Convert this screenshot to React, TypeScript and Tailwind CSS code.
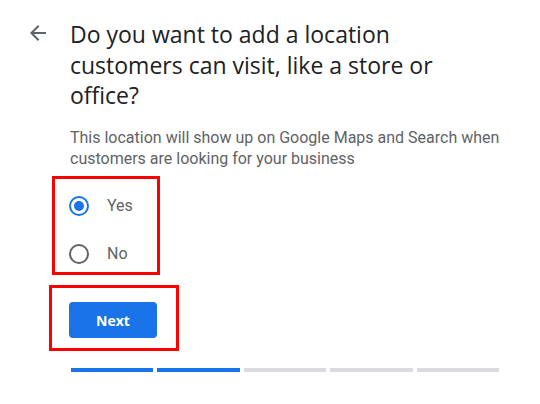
import React from "react";

export default function App() {
  return (
    <div className="w-[540px] h-[404px] bg-white flex overflow-hidden" style={{ fontFamily: "Roboto, Arial, sans-serif" }}>
      <div className="w-[70px] shrink-0 pl-[26px] pt-[21px]">
        <svg width="24" height="24" viewBox="0 0 24 24" fill="#5f6368">
          <path d="M20 11H7.83l5.59-5.59L12 4l-8 8 8 8 1.41-1.41L7.83 13H20v-2z" />
        </svg>
      </div>
      <div className="flex flex-col w-[440px] pt-[19px]">
        <h1 className="text-[23px] leading-[30.5px] text-[#202124] font-normal" style={{ fontFamily: "'Open Sans', Arial, sans-serif" }}>
          Do you want to add a location
          <br />
          customers can visit, like a store or
          <br />
          office?
        </h1>
        <p className="mt-[16px] text-[16px] leading-[21px] text-[#5f6368] whitespace-nowrap">
          This location will show up on Google Maps and Search when
          <br />
          customers are looking for your business
        </p>
        <div className="ml-[-18px] mt-[7.5px] w-[108px] h-[99px] border-[3px] border-[#ff0000] pt-[3px] pl-[14px]">
          <div className="flex items-center h-[48px]">
            <div className="w-[20px] h-[20px] rounded-full border-2 border-[#1a73e8] flex items-center justify-center">
              <div className="w-[10px] h-[10px] rounded-full bg-[#1a73e8]" />
            </div>
            <span className="ml-[18px] text-[16px] text-[#5f6368]">Yes</span>
          </div>
          <div className="flex items-center h-[48px]">
            <div className="w-[20px] h-[20px] rounded-full border-2 border-[#5f6368]" />
            <span className="ml-[18px] text-[16px] text-[#5f6368]">No</span>
          </div>
        </div>
        <div className="ml-[-21px] mt-[10px] w-[130px] h-[66px] border-[3px] border-[#ff0000] pt-[14px] pl-[17px]">
          <button className="w-[88px] h-[36px] rounded-[4px] bg-[#1a73e8] text-white text-[14px] font-bold flex items-center justify-center" style={{ fontFamily: "'Open Sans', Arial, sans-serif" }}>
            Next
          </button>
        </div>
        <div className="flex gap-1 ml-px mt-[17px] w-[428px]">
          <div className="flex-1 h-[4px] bg-[#1a73e8]" />
          <div className="flex-1 h-[4px] bg-[#1a73e8]" />
          <div className="flex-1 h-[4px] bg-[#dadce0]" />
          <div className="flex-1 h-[4px] bg-[#dadce0]" />
          <div className="flex-1 h-[4px] bg-[#dadce0]" />
        </div>
      </div>
    </div>
  );
}
